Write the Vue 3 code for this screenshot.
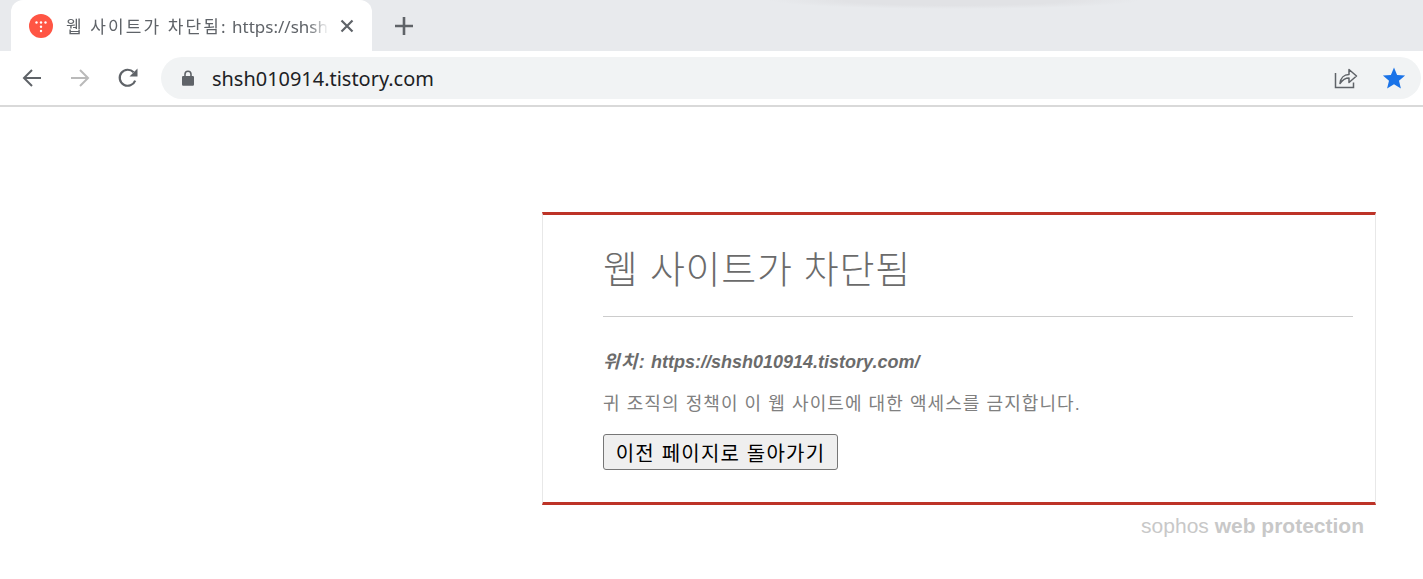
<script setup>
const title = '웹 사이트가 차단됨'
const url = 'shsh010914.tistory.com'
</script>

<template>
  <div class="page">
    <div class="tabstrip">
      <div class="tab">
        <svg class="favicon" viewBox="0 0 24 24" width="24" height="24">
          <circle cx="12" cy="12" r="12" fill="#ff5544" />
          <g fill="#fff">
            <circle cx="7.5" cy="8.5" r="1.2" /><circle cx="12" cy="8.5" r="1.2" /><circle cx="16.5" cy="8.5" r="1.2" />
            <circle cx="12" cy="12.8" r="1.2" /><circle cx="12" cy="17" r="1.2" />
          </g>
        </svg>
        <span class="tab-title"><span class="tab-ko">{{ title }}:</span> https://shsh</span>
        <svg class="tab-close" viewBox="0 0 14 14" width="14" height="14">
          <path d="M1.5 1.5 12.5 12.5M12.5 1.5 1.5 12.5" stroke="#5f6368" stroke-width="2.2" fill="none" />
        </svg>
      </div>
      <svg class="new-tab" viewBox="0 0 18 18" width="18" height="18">
        <path d="M9 0v18M0 9h18" stroke="#5f6368" stroke-width="2.6" fill="none" />
      </svg>
    </div>

    <div class="toolbar">
      <svg class="nav" viewBox="0 0 24 24" width="24" height="24">
        <path d="M21 12H4M12 4l-8 8 8 8" stroke="#5f6368" stroke-width="2" fill="none" />
      </svg>
      <svg class="nav" viewBox="0 0 24 24" width="24" height="24">
        <path d="M3 12h17M12 4l8 8-8 8" stroke="#bababa" stroke-width="2" fill="none" />
      </svg>
      <svg class="nav" viewBox="0 0 24 24" width="24" height="24">
        <path d="M19.2 14.6A8 8 0 1 1 17.6 6.3" stroke="#5f6368" stroke-width="2.2" fill="none" />
        <path d="M21.5 2.5v8h-8z" fill="#5f6368" />
      </svg>
      <div class="omnibox">
        <svg class="lock" viewBox="0 0 12 16" width="12" height="16">
          <path d="M1.5 6h9A1.3 1.3 0 0 1 12 7.3v7.2a1.3 1.3 0 0 1-1.500 1.300h-9A1.300 1.300 0 0 1 0 14.500V7.300A1.300 1.300 0 0 1 1.500 6z" fill="#5f6368" />
          <path d="M3 6.500V4.300a3 3 0 0 1 6 0v2.200" stroke="#5f6368" stroke-width="1.600" fill="none" />
        </svg>
        <span class="url">{{ url }}</span>
        <svg class="share" viewBox="0 0 24 24" width="24" height="24">
          <path d="M1.500 7v14.500h18v-5" stroke="#5f6368" stroke-width="1.500" fill="none" />
          <path d="M6 17.500c.5-5.500 4-9 9-9V3.500l7.500 6.500-7.500 6.500V12c-3.500 0-6.500 1.800-9 5.500z" stroke="#5f6368" stroke-width="1.500" fill="none" stroke-linejoin="round" />
        </svg>
        <svg class="star" viewBox="0 0 24 24" width="24" height="24">
          <path d="M12 1.500l3.100 7.400 8 .6-6.100 5.200 1.900 7.800L12 18.300l-6.900 4.200L7 14.700.9 9.500l8-.6z" fill="#1a73e8" />
        </svg>
      </div>
    </div>

    <main class="content">
      <section class="card">
        <h1 class="heading">{{ title }}</h1>
        <hr class="rule" />
        <p class="location"><span class="location-ko">위치:</span> https://shsh010914.tistory.com/</p>
        <p class="message">귀 조직의 정책이 이 웹 사이트에 대한 액세스를 금지합니다.</p>
        <button class="back" type="button">이전 페이지로 돌아가기</button>
      </section>
      <div class="brand">sophos <b>web protection</b></div>
    </main>
  </div>
</template>

<style scoped>
.page {
  width: 1423px;
  height: 579px;
  overflow: hidden;
  background: #fff;
  font-family: "Liberation Sans", "Noto Sans CJK KR", sans-serif;
}
.tabstrip {
  height: 51px;
  background: radial-gradient(ellipse 50% 100% at 50% 0, #e1e2e5 60%, #e8eaed) 770px 0 / 370px 9px no-repeat, #e8eaed;
  display: flex;
  align-items: center;
  padding-left: 11px;
  box-sizing: border-box;
}
.tab {
  width: 361px;
  height: 51px;
  background: #fff;
  border-radius: 12px 12px 0 0;
  display: flex;
  align-items: center;
  box-sizing: border-box;
  padding-left: 18px;
}
.favicon { flex: none; }
.tab-title {
  margin-left: 13px;
  width: 263px;
  overflow: hidden;
  white-space: nowrap;
  font: 17px "Noto Sans", "Noto Sans CJK KR", sans-serif;
  color: #5f6368;
  -webkit-mask-image: linear-gradient(to right, #000 92%, transparent);
  mask-image: linear-gradient(to right, #000 92%, transparent);
}
.tab-ko { letter-spacing: 2.1px; }
.tab-close { margin-left: 11px; flex: none; }
.new-tab { margin-left: 23px; flex: none; }
.toolbar {
  height: 54px;
  border-bottom: 2px solid #d9d9d9;
  display: flex;
  align-items: center;
  padding-left: 20px;
  gap: 24px;
  background: #fff;
}
.nav { flex: none; }
.omnibox {
  margin-left: -3px;
  width: 1260px;
  height: 42px;
  border-radius: 21px;
  background: #f1f3f4;
  display: flex;
  align-items: center;
  padding-left: 21px;
  box-sizing: border-box;
}
.lock { flex: none; }
.url {
  margin-left: 18px;
  font: 19.95px "Noto Sans", sans-serif;
  color: #202124;
  flex: 1;
}
.share { margin-right: 24px; flex: none; }
.star { margin-right: 15px; flex: none; }
.content {
  padding: 105px 0 0 542px;
}
.card {
  width: 834px;
  height: 293px;
  box-sizing: border-box;
  border: 1px solid #e8e8e8;
  border-top: 3px solid #bd3327;
  border-bottom: 3px solid #bd3327;
  padding: 27px 22px 0 60px;
}
.heading {
  margin: 0;
  font-size: 38px;
  font-weight: 300;
  line-height: 56px;
  letter-spacing: 0.7px;
  color: #6b6b6b;
}
.rule {
  margin: 18px 0 0;
  border: 0;
  border-top: 1px solid #cccccc;
}
.location {
  margin: 30px 0 0;
  font-size: 18px;
  line-height: 30px;
  font-weight: 700;
  font-style: italic;
  color: #6b6b6b;
}
.location-ko { letter-spacing: 1.3px; }
.message {
  margin: 12px 0 0;
  font-size: 18px;
  line-height: 30px;
  letter-spacing: 1.07px;
  color: #808080;
}
.back {
  display: block;
  margin: 15px 0 0;
  width: 235px;
  height: 36px;
  padding: 0;
  font-family: "Liberation Sans", "Noto Sans CJK KR", sans-serif;
  font-size: 20px;
  letter-spacing: 1.2px;
  color: #000;
  background: #efefef;
  border: 1px solid #767676;
  border-radius: 3px;
}
.brand {
  width: 822px;
  margin-top: 9px;
  text-align: right;
  font-size: 21px;
  line-height: 24px;
  color: #c8c8c8;
}
</style>
